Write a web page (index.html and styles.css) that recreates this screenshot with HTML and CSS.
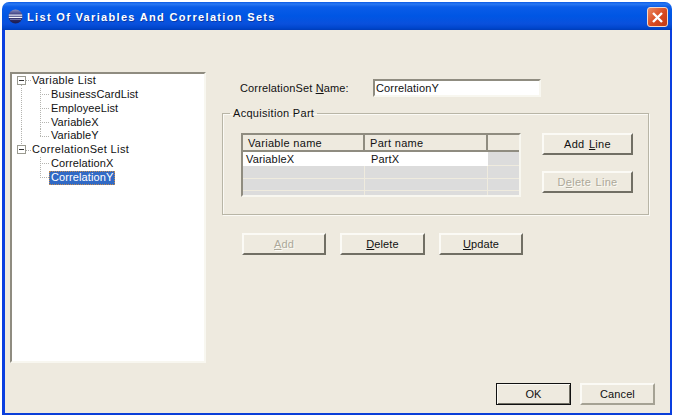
FILE: index.html
```html
<!DOCTYPE html>
<html lang="en">
<head>
<meta charset="utf-8">
<title>List Of Variables And Correlation Sets</title>
<link rel="stylesheet" href="styles.css">
</head>
<body>
<div class="window">
  <header class="titlebar">
    <svg class="app-icon" width="15" height="15" viewBox="0 0 15 15">
      <defs>
        <linearGradient id="globe" x1="0" y1="0" x2="0" y2="1">
          <stop offset="0" stop-color="#8a8fc0"/>
          <stop offset=".3" stop-color="#4a4c8c"/>
          <stop offset=".7" stop-color="#2a2a66"/>
          <stop offset="1" stop-color="#1c1c50"/>
        </linearGradient>
      </defs>
      <circle cx="7.5" cy="7.5" r="7" fill="url(#globe)"/>
      <path d="M.8 6.2h13.4" stroke="#e4e6f4" stroke-width="1.2"/>
      <path d="M.8 8.4h13.4" stroke="#f4f4fa" stroke-width="1.2"/>
      <path d="M2 10.4h11" stroke="#8e90bc" stroke-width=".8"/>
    </svg>
    <span class="title-text">List Of Variables And Correlation Sets</span>
    <span class="close-btn">
      <svg width="13" height="13" viewBox="0 0 13 13"><path d="M2 2l9 9M11 2l-9 9" stroke="#fff" stroke-width="2.4"/></svg>
    </span>
  </header>
  <div class="client">
    <div class="main">
      <nav class="tree">
        <div class="row root root-first"><span class="box"></span><span class="dash"></span><span class="label">Variable List</span></div>
        <div class="row"><span class="spine"></span><span class="elbow"></span><span class="label">BusinessCardList</span></div>
        <div class="row"><span class="spine"></span><span class="elbow"></span><span class="label">EmployeeList</span></div>
        <div class="row"><span class="spine"></span><span class="elbow"></span><span class="label">VariableX</span></div>
        <div class="row"><span class="spine"></span><span class="elbow last"></span><span class="label">VariableY</span></div>
        <div class="row root root-second"><span class="box"></span><span class="dash"></span><span class="label">CorrelationSet List</span></div>
        <div class="row"><span class="spine none"></span><span class="elbow"></span><span class="label">CorrelationX</span></div>
        <div class="row"><span class="spine none"></span><span class="elbow last"></span><span class="label selected">CorrelationY</span></div>
      </nav>
      <div class="form">
        <div class="name-row">
          <label class="name-label">CorrelationSet <u>N</u>ame:</label>
          <div class="field">CorrelationY</div>
        </div>
        <fieldset class="group">
          <legend class="legend">Acquisition Part</legend>
          <div class="group-body">
            <table class="grid">
              <thead>
                <tr><th class="col-a">Variable name</th><th class="col-b">Part name</th><th class="col-c"></th></tr>
              </thead>
              <tbody>
                <tr class="filled"><td>VariableX</td><td class="part">PartX</td><td class="blank"></td></tr>
                <tr class="r13"><td></td><td></td><td></td></tr>
                <tr class="r12"><td></td><td></td><td></td></tr>
                <tr class="r5"><td></td><td></td><td></td></tr>
              </tbody>
            </table>
            <div class="side-buttons">
              <button class="btn wide">Add <u>L</u>ine</button>
              <button class="btn wide off">D<u>e</u>lete Line</button>
            </div>
          </div>
        </fieldset>
        <div class="actions">
          <button class="btn action off"><u>A</u>dd</button>
          <button class="btn action del"><u>D</u>elete</button>
          <button class="btn action"><u>U</u>pdate</button>
        </div>
      </div>
    </div>
    <div class="footer">
      <button class="btn foot default">OK</button>
      <button class="btn foot flat">Cancel</button>
    </div>
  </div>
</div>
</body>
</html>
```
FILE: styles.css
```css
* { box-sizing: border-box; }
html, body { margin: 0; padding: 0; background: #fff; }
body { width: 676px; height: 420px; overflow: hidden; font: 11px/14px "Liberation Sans", Arial, sans-serif; color: #111; }
.window { margin: 2px 0 0 2px; width: 670px; height: 413px; display: flex; flex-direction: column; border-radius: 7px 7px 0 0; overflow: hidden; }
.titlebar { height: 28px; flex: none; display: flex; align-items: center; padding: 0 4px 0 6px; background: linear-gradient(#0a5ae6 0, #2a78f2 2px, #0a5ce8 5px, #0056e4 14px, #0a50dc 22px, #0046cc 26px, #003cb8 28px); color: #fff; }
.app-icon { flex: none; margin-top: 1px; }
.title-text { margin: 2px 0 0 4px; font: bold 11px/14px "Liberation Sans", Arial, sans-serif; letter-spacing: 1.33px; text-shadow: 1px 1px 0 #0a3aa8; }
.close-btn { margin-left: auto; width: 21px; height: 20px; margin-top: 2px; display: flex; align-items: center; justify-content: center; border: 1px solid #f4d8c8; border-radius: 3px; background: linear-gradient(135deg, #ea8a62, #d9491f 55%, #c23a14); }
.client { flex: 1; background: #eeeadf; border-left: 3px solid #0a3fe0; border-right: 2px solid #0a3fe0; border-bottom: 2px solid #0a3fd8; padding: 42px 15px 0 5px; display: flex; flex-direction: column; }
.main { display: flex; gap: 16px; height: 291px; }
.tree { width: 196px; height: 291px; flex: none; background: #fff; border: 2px solid; border-color: #8f8c80 #f8f7f0 #f8f7f0 #8f8c80; padding: 0 0 0 5px; }
.row { display: flex; height: 13.85px; align-items: stretch; white-space: nowrap; letter-spacing: .1px; }
.root-first { background: linear-gradient(#aaa 50%, transparent 50%) 4px 10px / 1px 4px no-repeat; }
.root-second { background: linear-gradient(#aaa 50%, transparent 50%) 4px 0 / 1px 3px no-repeat; }
.box { width: 9px; height: 9px; margin-top: 2px; flex: none; border: 1px solid #9a9a90; background: linear-gradient(#fff 3px, #333 3px, #333 4px, #fff 4px) center / 5px 7px no-repeat; }
.dash { width: 5px; flex: none; background: repeating-linear-gradient(90deg, #aaa 0 1px, transparent 1px 2px) 0 50% / 100% 1px no-repeat; }
.label { margin-left: 1px; padding: 0 1px; line-height: 13px; }
.root .label { margin-left: 0; letter-spacing: .35px; }
.spine { width: 23px; flex: none; background: repeating-linear-gradient(#b4b4b0 0 1px, transparent 1px 2px) 4px 0 / 1px 100% no-repeat; }
.spine.none { background: none; }
.elbow { width: 9px; flex: none; background: repeating-linear-gradient(#b4b4b0 0 1px, transparent 1px 2px) 0 0 / 1px 100% no-repeat, repeating-linear-gradient(90deg, #b4b4b0 0 1px, transparent 1px 2px) 0 50% / 100% 1px no-repeat; }
.elbow.last { background: repeating-linear-gradient(#b4b4b0 0 1px, transparent 1px 2px) 0 0 / 1px 50% no-repeat, repeating-linear-gradient(90deg, #b4b4b0 0 1px, transparent 1px 2px) 0 50% / 100% 1px no-repeat; }
.selected { background: #316ac5; color: #fff; outline: 1px dotted #c08a50; outline-offset: -1px; height: 14px; margin-left: 0; padding: 0 2px; }
.form { width: 427px; flex: none; padding-top: 7px; }
.name-row { display: flex; height: 18px; padding-left: 18px; align-items: center; letter-spacing: .15px; }
.name-label { width: 133px; flex: none; }
.field { width: 168px; height: 18px; background: #fff; border: 2px solid; border-color: #8f8c80 #f8f7f0 #f8f7f0 #8f8c80; padding-left: 1px; line-height: 14px; }
.group { margin: 9px 0 0; padding: 13px 15px 18px 18px; height: 109px; min-width: 0; border: 1px solid #b8b5a6; box-shadow: 1px 1px 0 #fbfaf5, inset 1px 1px 0 #fbfaf5; }
.legend { margin-left: -11px; padding: 0 3px; line-height: 14px; letter-spacing: .3px; }
.group-body { display: flex; }
.grid { width: 280px; height: 64px; flex: none; table-layout: fixed; border-collapse: separate; border-spacing: 0; background: #dcdcdc; border: 2px solid; border-color: #8f8c80 #f8f7f0 #f8f7f0 #8f8c80; letter-spacing: .15px; }
.grid th { height: 17px; padding: 0 0 0 5px; background: #eeeadf; font-weight: normal; text-align: left; border-right: 2px solid #8f8c80; border-bottom: 2px solid #8f8c80; line-height: 14px; letter-spacing: .3px; }
.grid .col-a { width: 122px; }
.grid .col-b { width: 123px; }
.grid .col-c { border-right: 0; }
.grid td { padding: 0 0 0 3px; border-right: 1px solid #efebde; border-bottom: 1px solid #efebde; line-height: 12px; height: 14px; }
.grid td.part { padding-left: 6px; }
.grid td:last-child { border-right: 0; }
.grid .filled td { background: #fff; height: 14px; border-color: #fff; }
.grid .filled td.blank { background: #dcdcdc; border-color: #efebde; }
.grid .r13 td { height: 13px; }
.grid .r12 td { height: 12px; }
.grid .r5 td { height: 4px; border-bottom: 0; }
.side-buttons { margin-left: 21px; display: flex; flex-direction: column; gap: 16px; }
.btn { font: 11px/14px "Liberation Sans", Arial, sans-serif; color: #111; background: #eeeadf; border: 2px solid; border-color: #fbfaf5 #716f64 #716f64 #fbfaf5; padding: 0; margin: 0; height: 22px; letter-spacing: .1px; }
.btn.off { color: #aca899; text-shadow: 1px 1px 0 #fbfaf5; }
.wide { width: 91px; word-spacing: 1px; letter-spacing: .3px; }
.actions { margin-top: 18px; padding-left: 20px; display: flex; gap: 14px; }
.action { width: 84px; }
.action.del { width: 85px; }
.footer { margin-top: 20px; display: flex; justify-content: flex-end; gap: 9px; }
.foot { width: 75px; }
.foot.default { border: 1px solid #111; box-shadow: inset 1px 1px 0 #fbfaf5, inset -1px -1px 0 #716f64; }
.foot.flat { border-color: #fbfaf5 #a5a294 #a5a294 #fbfaf5; }
```
